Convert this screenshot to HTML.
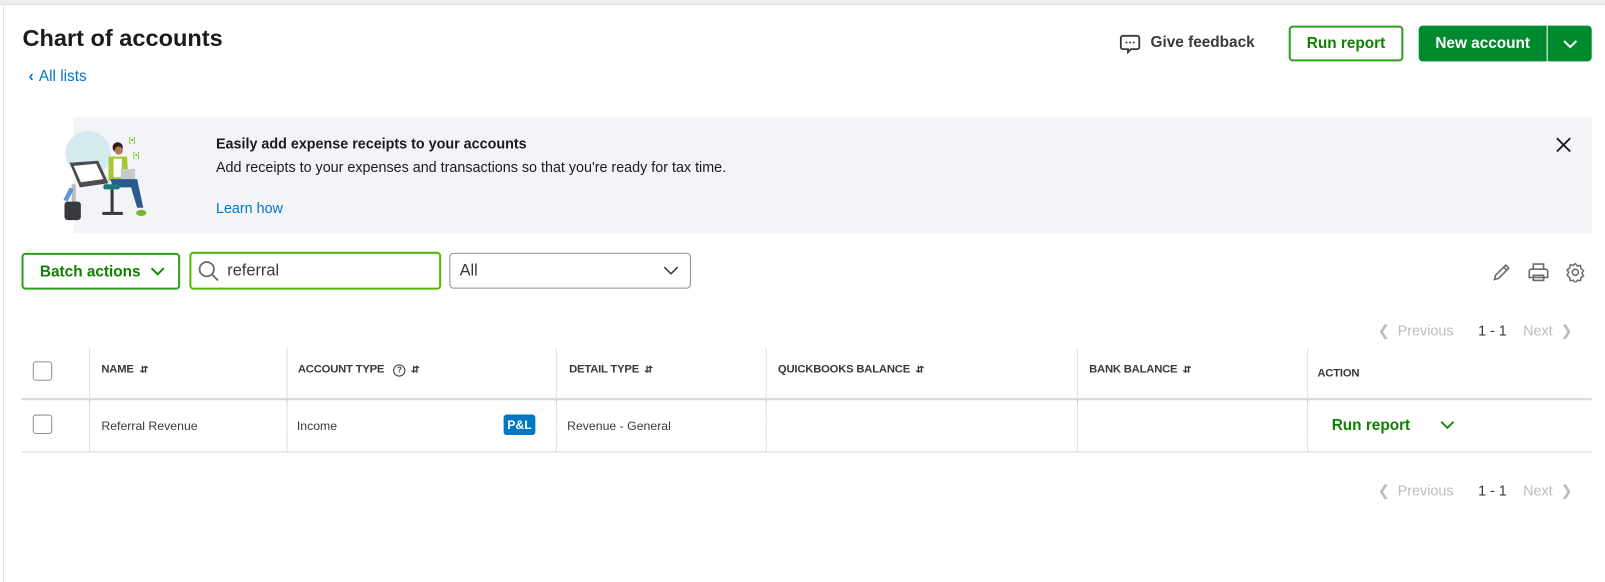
<!DOCTYPE html>
<html><head><style>
*{box-sizing:border-box;margin:0;padding:0}
body{width:1605px;height:569px;background:#fff;font-family:"Liberation Sans",sans-serif;position:relative;overflow:hidden;color:#393a3d}
#w{position:absolute;left:0;top:0;width:1568px;height:556px;transform:scale(1.0236);transform-origin:0 0}
.a{position:absolute}
.top{left:0;top:0;width:1605px;height:5px;background:#eceef1;border-bottom:1px solid #dcdfe4}
.lb{left:3px;top:5px;width:1px;height:564px;background:#dcdfe4}
h1{position:absolute;left:22px;top:24px;font-size:23px;font-weight:bold;color:#1a1b1d}
.btn{position:absolute;border-radius:4px;font-weight:bold;font-size:15px;display:flex;align-items:center;justify-content:center}
.hd{font-size:11px;font-weight:bold;color:#393a3d;letter-spacing:-0.2px}
.sort{display:inline-block;font-size:9px;margin-left:6px;transform:scaleX(1.2)}
.cell{font-size:12px;color:#393a3d}
.vl{position:absolute;width:1px;background:#dcdfe4}
.vd{position:absolute;width:0;border-left:1px dotted #bfc2c7}
.cb{position:absolute;width:19px;height:19px;border:1px solid #8d9096;border-radius:3px;background:#fff}
.pg{font-size:14px;color:#b9bcc0}
</style></head><body>
<div class="a top"></div>
<div id="w">
<div class="a lb"></div>
<h1>Chart of accounts</h1>
<div class="a" style="left:28px;top:66px;font-size:15px;color:#0077c5"><span style="font-weight:bold;margin-right:5px">&#8249;</span>All lists</div>

<svg class="a" style="left:1093px;top:32px" width="22" height="22" viewBox="0 0 22 22"><path d="M4 3h14a2 2 0 0 1 2 2v9a2 2 0 0 1-2 2h-6l-3 3v-3H4a2 2 0 0 1-2-2V5a2 2 0 0 1 2-2z" fill="none" stroke="#393a3d" stroke-width="1.8"/><circle cx="7.5" cy="9.5" r="1" fill="#393a3d"/><circle cx="11" cy="9.5" r="1" fill="#393a3d"/><circle cx="14.5" cy="9.5" r="1" fill="#393a3d"/></svg>
<div class="a" style="left:1124px;top:33px;font-size:15px;font-weight:bold;color:#393a3d">Give feedback</div>
<div class="btn" style="left:1259px;top:25px;width:112px;height:35px;border:2px solid #2ca01c;color:#108000;">Run report</div>
<div class="btn" style="left:1386px;top:25px;width:125px;height:35px;background:#008a2e;color:#fff;border-radius:4px 0 0 4px">New account</div>
<div class="btn" style="left:1512px;top:25px;width:43px;height:35px;background:#008a2e;color:#fff;border-radius:0 4px 4px 0"><svg width="16" height="10" viewBox="0 0 16 10"><path d="M2 2l6 6 6-6" fill="none" stroke="#fff" stroke-width="2"/></svg></div>

<div class="a" style="left:72px;top:115px;width:1483px;height:113px;background:#f3f4f7"></div>
<svg class="a" style="left:58px;top:125px" width="90" height="95" viewBox="0 0 90 95">
<circle cx="28" cy="25" r="22" fill="#d4eaec"/>
<path d="M10 34l28-2 10 22-28 4z" fill="#4a4c50"/><path d="M14 37l22-2 7 15-22 3z" fill="#fff"/>
<rect x="12" y="55" width="4" height="30" fill="#bbb"/>
<rect x="5" y="72" width="16" height="18" rx="3" fill="#393a3d"/>
<path d="M4 70l6-12 4 2-6 12z" fill="#5b9bd5"/>
<circle cx="57" cy="19" r="5" fill="#2b1b14"/><circle cx="58" cy="22" r="4" fill="#b07a4f"/>
<path d="M48 28h18l2 24H48z" fill="#a3c93a"/><rect x="53" y="30" width="8" height="18" fill="#fff"/>
<rect x="60" y="40" width="14" height="10" fill="#c8c9cc"/>
<path d="M50 50h26l6 28h-6l-6-20H52z" fill="#2b5a8f"/>
<rect x="43" y="55" width="16" height="5" rx="2" fill="#1e7a7a"/>
<rect x="50" y="60" width="3" height="22" fill="#393a3d"/><rect x="42" y="82" width="20" height="3" fill="#393a3d"/>
<ellipse cx="80" cy="83" rx="5" ry="3" fill="#7ab32e"/>
<text x="68" y="14" font-size="7" fill="#53b700" font-family="Liberation Sans">[•]</text>
<text x="72" y="29" font-size="7" fill="#53b700" font-family="Liberation Sans">[•]</text>
</svg>
<div class="a" style="left:211px;top:132px;font-size:14px;font-weight:bold;color:#1a1b1d">Easily add expense receipts to your accounts</div>
<div class="a" style="left:211px;top:155px;font-size:14px;color:#1a1b1d">Add receipts to your expenses and transactions so that you're ready for tax time.</div>
<div class="a" style="left:211px;top:195px;font-size:14px;color:#0077c5">Learn how</div>
<svg class="a" style="left:1520px;top:134px" width="15" height="15" viewBox="0 0 15 15"><path d="M1 1l13 13M14 1L1 14" stroke="#1a1b1d" stroke-width="1.8"/></svg>

<div class="btn" style="left:21px;top:247px;width:155px;height:36px;border:2px solid #2ca01c;color:#108000;justify-content:flex-start;padding-left:16px">Batch actions<svg style="margin-left:10px" width="14" height="9" viewBox="0 0 14 9"><path d="M1 1l6 6 6-6" fill="none" stroke="#108000" stroke-width="1.8"/></svg></div>
<div class="a" style="left:185px;top:246px;width:246px;height:37px;border:2px solid #53b700;border-radius:4px"></div>
<svg class="a" style="left:193px;top:254px" width="22" height="22" viewBox="0 0 22 22"><circle cx="9" cy="9" r="7" fill="none" stroke="#6b6c72" stroke-width="1.8"/><path d="M14 14l6 6" stroke="#6b6c72" stroke-width="1.8"/></svg>
<div class="a" style="left:222px;top:256px;font-size:16px;color:#393a3d">referral</div>
<div class="a" style="left:439px;top:247px;width:236px;height:35px;border:1px solid #8d9096;border-radius:4px"></div>
<div class="a" style="left:449px;top:256px;font-size:16px;color:#393a3d">All</div>
<svg class="a" style="left:648px;top:260px" width="15" height="9" viewBox="0 0 15 9"><path d="M1 1l6.5 6.5L14 1" fill="none" stroke="#393a3d" stroke-width="1.5"/></svg>

<svg class="a" style="left:1457px;top:256px" width="20" height="20" viewBox="0 0 20 20"><path d="M3 17l1-4L14 3l3 3L7 16z M12 5l3 3" fill="none" stroke="#6b6c72" stroke-width="1.6"/></svg>
<svg class="a" style="left:1492px;top:256px" width="22" height="20" viewBox="0 0 22 20"><path d="M6 7V2h10v5M4 7h14a2 2 0 0 1 2 2v6H2V9a2 2 0 0 1 2-2zM6 13h10v5H6z" fill="none" stroke="#6b6c72" stroke-width="1.6"/></svg>
<svg class="a" style="left:1529px;top:256px" width="20" height="20" viewBox="0 0 20 20"><path d="M10 1.5l2 2.3 3-.4.5 3 2.5 1.8-1.5 2.6 1.5 2.6-2.5 1.8-.5 3-3-.4-2 2.3-2-2.3-3 .4-.5-3L2 12.8l1.5-2.6L2 7.6l2.5-1.8.5-3 3 .4z" fill="none" stroke="#6b6c72" stroke-width="1.5"/><circle cx="10" cy="10" r="3" fill="none" stroke="#6b6c72" stroke-width="1.5"/></svg>

<div class="a pg" style="left:1346px;top:315px">&#10094;&nbsp; Previous</div>
<div class="a" style="left:1444px;top:315px;font-size:14px;color:#393a3d">1 - 1</div>
<div class="a pg" style="left:1488px;top:315px">Next &nbsp;&#10095;</div>

<div class="vl" style="left:87px;top:340px;height:50px"></div>
<div class="vl" style="left:280px;top:340px;height:50px"></div>
<div class="vl" style="left:543px;top:340px;height:50px"></div>
<div class="vl" style="left:748px;top:340px;height:50px"></div>
<div class="vl" style="left:1052px;top:340px;height:50px"></div>
<div class="vl" style="left:1277px;top:340px;height:50px"></div>
<div class="a" style="left:21px;top:389px;width:1534px;height:2px;background:#d4d7dc"></div>
<div class="cb" style="left:32px;top:353px"></div>
<div class="a hd" style="left:99px;top:355px">NAME<span class="sort">&#8693;</span></div>
<div class="a hd" style="left:291px;top:355px">ACCOUNT TYPE <span style="display:inline-block;width:12px;height:12px;border:1px solid #393a3d;border-radius:50%;font-size:8px;text-align:center;line-height:10px;margin-left:6px">?</span><span class="sort">&#8693;</span></div>
<div class="a hd" style="left:556px;top:355px">DETAIL TYPE<span class="sort">&#8693;</span></div>
<div class="a hd" style="left:760px;top:355px">QUICKBOOKS BALANCE<span class="sort">&#8693;</span></div>
<div class="a hd" style="left:1064px;top:355px">BANK BALANCE<span class="sort">&#8693;</span></div>
<div class="a hd" style="left:1287px;top:359px">ACTION</div>

<div class="vd" style="left:87px;top:391px;height:50px"></div>
<div class="vd" style="left:280px;top:391px;height:50px"></div>
<div class="vd" style="left:543px;top:391px;height:50px"></div>
<div class="vd" style="left:748px;top:391px;height:50px"></div>
<div class="vd" style="left:1052px;top:391px;height:50px"></div>
<div class="vd" style="left:1277px;top:391px;height:50px"></div>
<div class="cb" style="left:32px;top:405px"></div>
<div class="a cell" style="left:99px;top:409px">Referral Revenue</div>
<div class="a cell" style="left:290px;top:409px">Income</div>
<div class="a" style="left:492px;top:405px;width:31px;height:20px;background:#0077c5;color:#fff;font-size:12px;font-weight:bold;border-radius:3px;text-align:center;line-height:20px">P&amp;L</div>
<div class="a cell" style="left:554px;top:409px">Revenue - General</div>
<div class="a" style="left:1301px;top:407px;font-size:15px;font-weight:bold;color:#108000">Run report</div>
<svg class="a" style="left:1407px;top:411px" width="14" height="9" viewBox="0 0 14 9"><path d="M1 1l6 6 6-6" fill="none" stroke="#108000" stroke-width="1.8"/></svg>
<div class="a" style="left:21px;top:441px;width:1534px;height:1px;background:#d4d7dc"></div>

<div class="a pg" style="left:1346px;top:471px">&#10094;&nbsp; Previous</div>
<div class="a" style="left:1444px;top:471px;font-size:14px;color:#393a3d">1 - 1</div>
<div class="a pg" style="left:1488px;top:471px">Next &nbsp;&#10095;</div>
</div>
</body></html>
